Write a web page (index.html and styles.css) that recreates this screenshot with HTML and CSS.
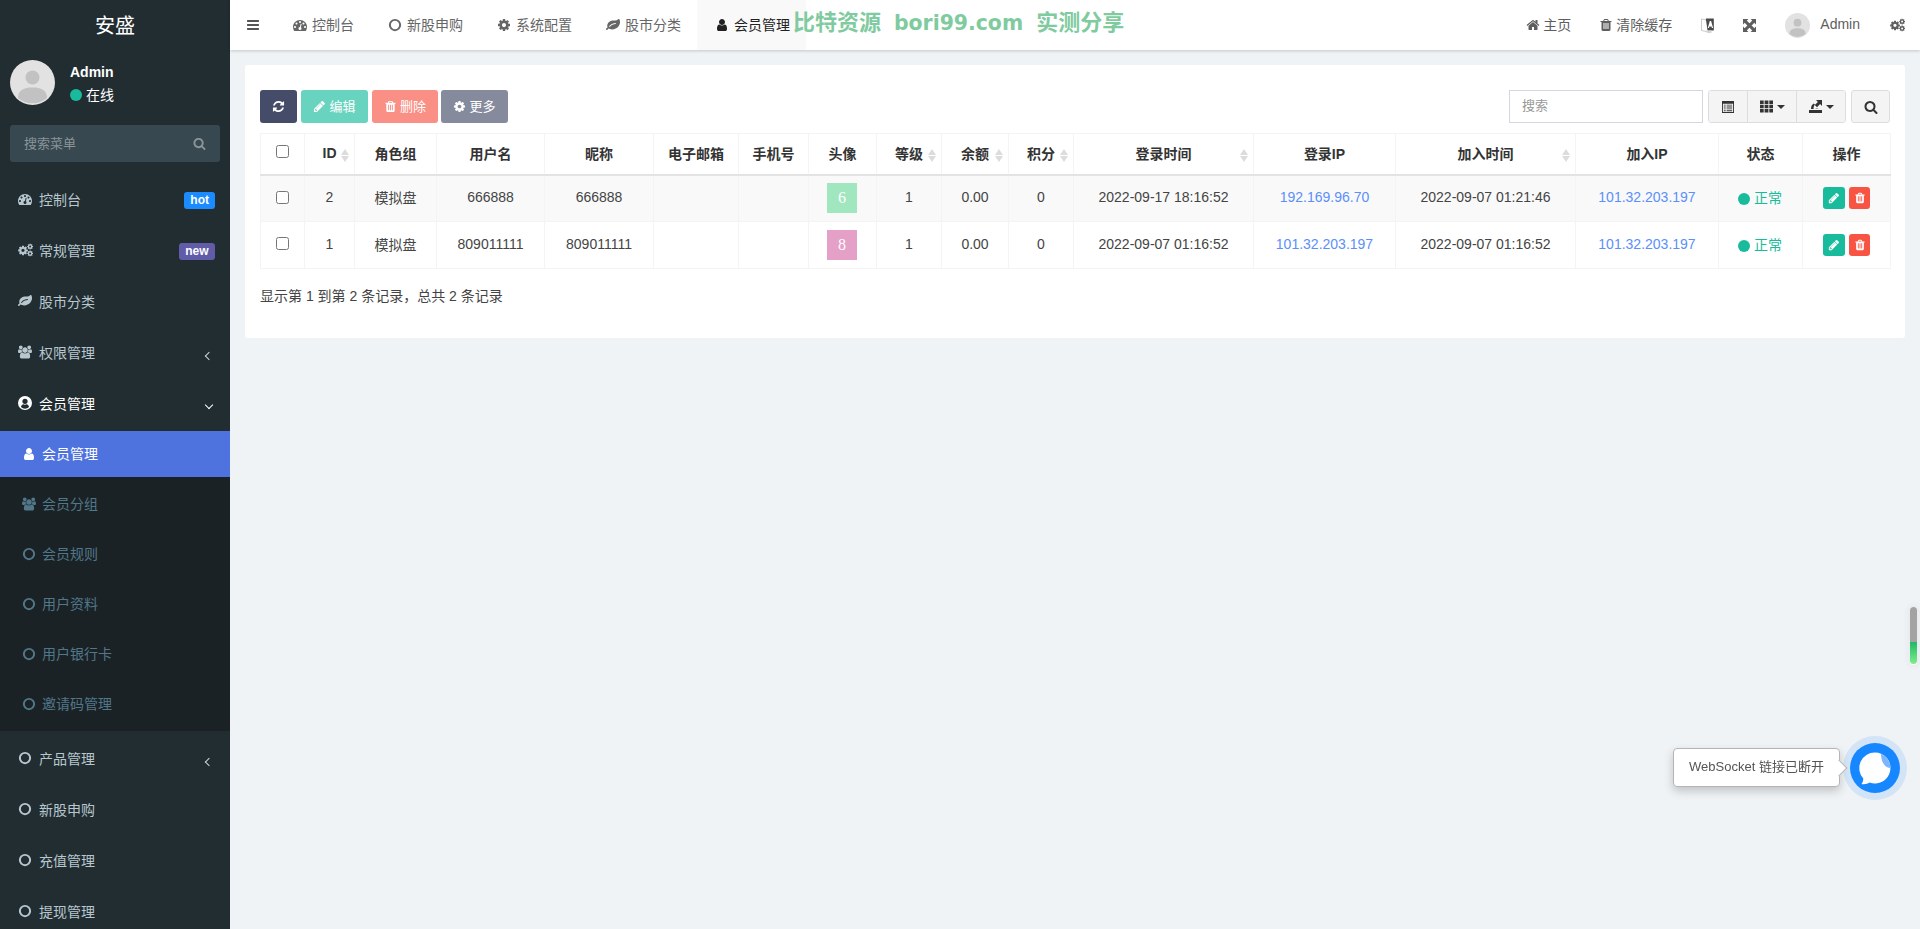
FILE: index.html
```html
<!DOCTYPE html>
<html lang="zh-CN">
<head>
<meta charset="utf-8">
<title>会员管理</title>
<link rel="stylesheet" href="styles.css">
</head>
<body>
<svg class="defs" aria-hidden="true">
  <symbol id="bars" viewBox="0 0 1792 1792"><path d="M1664 1344v128q0 26-19 45t-45 19h-1408q-26 0-45-19t-19-45v-128q0-26 19-45t45-19h1408q26 0 45 19t19 45zm0-512v128q0 26-19 45t-45 19h-1408q-26 0-45-19t-19-45v-128q0-26 19-45t45-19h1408q26 0 45 19t19 45zm0-512v128q0 26-19 45t-45 19h-1408q-26 0-45-19t-19-45v-128q0-26 19-45t45-19h1408q26 0 45 19t19 45z"/></symbol>
  <symbol id="search" viewBox="0 0 1792 1792"><path d="M1216 832q0-185-131.500-316.500t-316.500-131.500-316.500 131.500-131.500 316.500 131.500 316.500 316.500 131.500 316.500-131.500 131.500-316.500zm512 832q0 52-38 90t-90 38q-54 0-90-38l-343-342q-179 124-399 124-143 0-273.500-55.500t-225-150-150-225-55.500-273.500 55.500-273.500 150-225 225-150 273.500-55.500 273.500 55.500 225 150 150 225 55.500 273.500q0 220-124 399l343 343q37 37 37 90z"/></symbol>
  <symbol id="trash" viewBox="0 0 1792 1792"><path d="M704 1376v-704q0-14-9-23t-23-9h-64q-14 0-23 9t-9 23v704q0 14 9 23t23 9h64q14 0 23-9t9-23zm256 0v-704q0-14-9-23t-23-9h-64q-14 0-23 9t-9 23v704q0 14 9 23t23 9h64q14 0 23-9t9-23zm256 0v-704q0-14-9-23t-23-9h-64q-14 0-23 9t-9 23v704q0 14 9 23t23 9h64q14 0 23-9t9-23zm-544-992h448l-48-117q-7-9-17-11h-317q-10 2-17 11zm928 32v64q0 14-9 23t-23 9h-96v948q0 83-47 143.500t-113 60.500h-832q-66 0-113-58.500t-47-141.500v-952h-96q-14 0-23-9t-9-23v-64q0-14 9-23t23-9h309l70-167q15-37 54-63t79-26h320q40 0 79 26t54 63l70 167h309q14 0 23 9t9 23z"/></symbol>
  <symbol id="pencil" viewBox="0 0 1792 1792"><path d="M491 1536l91-91-235-235-91 91v107h128v128h107zm523-928q0-22-22-22-10 0-17 7l-542 542q-7 7-7 17 0 22 22 22 10 0 17-7l542-542q7-7 7-17zm-54-192l416 416-832 832h-416v-416zm683 96q0 53-37 90l-166 166-416-416 166-165q36-38 90-38 53 0 91 38l235 234q37 39 37 91z"/></symbol>
  <symbol id="home" viewBox="0 0 1792 1792"><path d="M1472 992v480q0 26-19 45t-45 19h-384v-384h-256v384h-384q-26 0-45-19t-19-45v-480q0-1 .5-3t.5-3l575-474 575 474q1 2 1 6zm223-69l-62 74q-8 9-21 11h-3q-13 0-21-7l-692-577-692 577q-12 8-24 7-13-2-21-11l-62-74q-8-10-7-23.500t11-21.500l719-599q32-26 76-26t76 26l244 204v-195q0-14 9-23t23-9h192q14 0 23 9t9 23v408l219 182q10 8 11 21.500t-7 23.500z"/></symbol>
  <symbol id="user" viewBox="0 0 1792 1792"><path d="M1536 1399q0 109-62.500 187t-150.500 78h-854q-88 0-150.500-78t-62.500-187q0-85 8.500-160.500t31.500-152 58.500-131 94-89 134.500-34.500q131 128 313 128t313-128q76 0 134.500 34.500t94 89 58.500 131 31.500 152 8.500 160.500zm-256-887q0 159-112.500 271.500t-271.500 112.500-271.500-112.500-112.500-271.500 112.500-271.500 271.500-112.500 271.500 112.500 112.500 271.500z"/></symbol>
  <symbol id="users" viewBox="0 0 1920 1792"><path d="M593 896q-162 5-265 128h-134q-82 0-138-40.500t-56-118.500q0-353 124-353 6 0 43.500 21t97.500 42.500 119 21.500q67 0 133-23-5 37-5 66 0 139 81 256zm1071 637q0 120-73 189.500t-194 69.500h-874q-121 0-194-69.500t-73-189.500q0-53 3.500-103.500t14-109 26.500-108.500 43-97.500 62-81 85.500-53.500 111.500-20q10 0 43 21.500t73 48 107 48 135 21.500 135-21.500 107-48 73-48 43-21.500q61 0 111.500 20t85.500 53.500 62 81 43 97.500 26.500 108.500 14 109 3.500 103.500zm-1024-1277q0 106-75 181t-181 75-181-75-75-181 75-181 181-75 181 75 75 181zm704 384q0 159-112.500 271.500t-271.500 112.500-271.500-112.500-112.500-271.500 112.500-271.500 271.500-112.500 271.500 112.500 112.500 271.500zm576 225q0 78-56 118.500t-138 40.500h-134q-103-123-265-128 81-117 81-256 0-29-5-66 66 23 133 23 59 0 119-21.500t97.500-42.500 43.500-21q124 0 124 353zm-128-609q0 106-75 181t-181 75-181-75-75-181 75-181 181-75 181 75 75 181z"/></symbol>
  <symbol id="cog" viewBox="0 0 1792 1792"><path id="cogp" d="M1152 896q0-106-75-181t-181-75-181 75-75 181 75 181 181 75 181-75 75-181zm512-109v222q0 12-8 23t-20 13l-185 28q-19 54-39 91 35 50 107 138 10 12 10 25t-9 23q-27 37-99 108t-94 71q-12 0-26-9l-138-108q-44 23-91 38-16 136-29 186-7 28-36 28h-222q-14 0-24.500-8.500t-11.500-21.500l-28-184q-49-16-90-37l-141 107q-10 9-25 9-14 0-25-11-126-114-165-168-7-10-7-23 0-12 8-23 15-21 51-66.500t54-70.500q-27-50-41-99l-183-27q-13-2-21-12.500t-8-23.500v-222q0-12 8-23t19-13l186-28q14-46 39-92-40-57-107-138-10-12-10-24 0-10 9-23 26-36 98.500-107.500t94.500-71.500q13 0 26 10l138 107q44-23 91-38 16-136 29-186 7-28 36-28h222q14 0 24.500 8.500t11.500 21.500l28 184q49 16 90 37l142-107q9-9 24-9 13 0 25 10 129 119 165 170 7 8 7 22 0 12-8 23-15 21-51 66.500t-54 70.500q26 50 41 98l183 28q13 2 21 12.500t8 23.500z"/></symbol>
  <symbol id="cogs" viewBox="0 0 2048 1792">
    <use href="#cogp" transform="translate(-90 190) scale(.86)"/>
    <use href="#cogp" transform="translate(1190 -40) scale(.52)"/>
    <use href="#cogp" transform="translate(1190 900) scale(.52)"/>
  </symbol>
  <symbol id="refresh" viewBox="0 0 1792 1792"><path d="M1639 1056q0 5-1 7-64 268-268 434.500t-478 166.500q-146 0-282.500-55t-243.500-157l-129 129q-19 19-45 19t-45-19-19-45v-448q0-26 19-45t45-19h448q26 0 45 19t19 45-19 45l-137 137q71 66 161 102t187 36q134 0 250-65t186-179q11-17 53-117 8-23 30-23h192q13 0 22.500 9.500t9.500 22.500zm25-800v448q0 26-19 45t-45 19h-448q-26 0-45-19t-19-45 19-45l138-138q-148-137-349-137-134 0-250 65t-186 179q-11 17-53 117-8 23-30 23h-199q-13 0-22.500-9.500t-9.500-22.500v-7q65-268 270-434.500t480-166.500q146 0 284 55.500t245 156.500l130-129q19-19 45-19t45 19 19 45z"/></symbol>
  <symbol id="leaf" viewBox="0 0 1792 1792"><path d="M1280 704q0-26-19-45t-45-19q-172 0-318 49.500t-259.500 134-235.500 219.500q-19 21-19 45 0 26 19 45t45 19q24 0 45-19 27-24 74-71t67-66q137-124 268.500-176t313.500-52q26 0 45-19t19-45zm512-198q0 95-20 193-46 224-184.500 383t-357.500 268q-214 108-438 108-148 0-286-47-15-5-88-42t-96-37q-16 0-39.500 32t-45 70-52.500 70-60 32q-30 0-51-11t-31-24-27-42q-2-4-6-11t-5.500-10-3-9.500-1.500-13.500q0-35 31-73.500t68-65.500 68-56 31-48q0-4-14-38t-16-44q-9-51-9-104 0-115 43.500-220t119-184.500 170.500-139 204-95.500q55-18 145-25.500t179.500-9 178.500-6 163.500-24 113.500-56.500l29.500-29.500 29.500-28 27-20 36.500-16 43.500-4.500q39 0 70.500 46t47.500 112 24 124 8 96z"/></symbol>
  <symbol id="dash" viewBox="0 0 1792 1792"><path d="M384 1152q0-53-37.500-90.500t-90.500-37.500-90.500 37.500-37.500 90.500 37.500 90.500 90.500 37.500 90.500-37.500 37.500-90.500zm192-448q0-53-37.500-90.500t-90.500-37.500-90.500 37.500-37.500 90.500 37.500 90.500 90.500 37.500 90.500-37.500 37.500-90.500zm428 481l101-382q6-26-7.500-48.500t-38.500-29.500-48 6.500-30 39.500l-101 382q-60 5-107 43.500t-63 98.500q-20 77 20 146t117 89 146-20 89-117q16-60-6-117t-72-91zm660-33q0-53-37.500-90.500t-90.500-37.500-90.500 37.500-37.500 90.500 37.500 90.500 90.500 37.500 90.500-37.500 37.500-90.500zm-640-640q0-53-37.500-90.500t-90.500-37.500-90.500 37.500-37.500 90.500 37.500 90.500 90.500 37.500 90.500-37.500 37.500-90.500zm448 192q0-53-37.500-90.500t-90.500-37.500-90.500 37.500-37.500 90.500 37.500 90.500 90.500 37.500 90.500-37.500 37.500-90.500zm320 448q0 261-141 483-19 29-54 29h-1402q-35 0-54-29-141-221-141-483 0-182 71-348t191-286 286-191 348-71 348 71 286 191 191 286 71 348z"/></symbol>
  <symbol id="ring" viewBox="0 0 24 24"><circle cx="12" cy="12" r="8.800" fill="none" stroke="currentColor" stroke-width="3.400"/></symbol>
  <symbol id="ucircle" viewBox="0 0 24 24"><path fill-rule="evenodd" d="M12 0a12 12 0 1 0 0 24 12 12 0 0 0 0-24zM12 4.500a4.500 4.500 0 1 1 0 9 4.500 4.500 0 0 1 0-9zM5 19c.6-3 2.600-4.500 4-4.800 1.800 1 4.200 1 6 0 1.400.3 3.400 1.800 4 4.800a9.700 9.700 0 0 1-14 0z"/></symbol>
  <symbol id="expand" viewBox="0 0 24 24"><path d="M0 0h10L0 10zM24 0v10L14 0zM0 24V14l10 10zM24 24H14l10-10z"/><path d="M4 4l16 16M20 4L4 20" fill="none" stroke="currentColor" stroke-width="5.500"/></symbol>
  <symbol id="grid" viewBox="0 0 13 12"><path d="M0 0h3.700v3.400H0zM4.600 0h3.800v3.400H4.600zM9.300 0H13v3.400H9.300zM0 4.300h3.700v3.400H0zM4.600 4.300h3.800v3.400H4.600zM9.300 4.300H13v3.400H9.300zM0 8.600h3.700V12H0zM4.600 8.600h3.800V12H4.600zM9.300 8.600H13V12H9.300z"/></symbol>
  <symbol id="sheet" viewBox="0 0 13 13"><path fill-rule="evenodd" d="M0 0h13v13H0zM1 3v9h11V3z"/><path d="M2 4h2v1H2zM5 4h6v1H5zM2 6h2v1H2zM5 6h6v1H5zM2 8h2v1H2zM5 8h6v1H5zM2 10h2v1H2zM5 10h6v1H5z"/></symbol>
  <symbol id="export" viewBox="0 0 13 13"><path d="M0 10h13v3H0z"/><path d="M7 0h6v6l-1.900-1.900L8 7.200 5.800 5l3.100-3.100z"/><path d="M2 9c0-2.800 1-4.500 2.800-5.500L6 4.800C4.800 5.700 4.600 7 4.600 9zM6 9l2-.6L9.500 9z"/></symbol>
  <symbol id="lang" viewBox="0 0 13 15"><path fill="#fff" stroke="#bdbdbd" stroke-width=".8" d="M.5 1l7 1.500V14l-7-1.500z"/><path fill="#4a4a4a" d="M4.800.5h8V12.500H6.500z"/><path fill="#fff" d="M6.800 10l2-7h1.300l2 7h-1.200l-.4-1.500H8.400L8 10z"/><path fill="#d5d5d5" d="M5 12.500h5.500V15H6z"/></symbol>
  <symbol id="avatar" viewBox="0 0 45 45"><circle cx="22.500" cy="22.500" r="22.500" fill="#e2e2e2"/><circle cx="22.500" cy="17.500" r="7" fill="#c2c2c2"/><path fill="#c2c2c2" d="M8 38c0-8 6-10.500 14.500-10.500S37 30 37 38a22.500 22.500 0 0 1-29 0z"/></symbol>
</svg>

<div class="app">
  <aside class="side">
    <div class="logo">安盛</div>
    <div class="upanel">
      <svg class="uimg"><use href="#avatar"/></svg>
      <div class="uinfo">
        <div class="uname">Admin</div>
        <div class="ustate"><span class="dot"></span>在线</div>
      </div>
    </div>
    <div class="sform"><span>搜索菜单</span><svg class="i sico"><use href="#search"/></svg></div>
    <ul class="menu">
      <li class="mi"><svg class="i"><use href="#dash"/></svg><span class="ml">控制台</span><b class="tag hot">hot</b></li>
      <li class="mi"><svg class="i cogi"><use href="#cogs"/></svg><span class="ml">常规管理</span><b class="tag new">new</b></li>
      <li class="mi"><svg class="i"><use href="#leaf"/></svg><span class="ml">股市分类</span></li>
      <li class="mi"><svg class="i"><use href="#users"/></svg><span class="ml">权限管理</span><i class="chev left"></i></li>
      <li class="mi open"><svg class="i"><use href="#ucircle"/></svg><span class="ml">会员管理</span><i class="chev down"></i></li>
      <li class="subwrap">
        <ul class="sub">
          <li class="si on"><svg class="i"><use href="#user"/></svg><span>会员管理</span></li>
          <li class="si"><svg class="i"><use href="#users"/></svg><span>会员分组</span></li>
          <li class="si"><svg class="i"><use href="#ring"/></svg><span>会员规则</span></li>
          <li class="si"><svg class="i"><use href="#ring"/></svg><span>用户资料</span></li>
          <li class="si"><svg class="i"><use href="#ring"/></svg><span>用户银行卡</span></li>
          <li class="si"><svg class="i"><use href="#ring"/></svg><span>邀请码管理</span></li>
        </ul>
      </li>
      <li class="mi"><svg class="i"><use href="#ring"/></svg><span class="ml">产品管理</span><i class="chev left"></i></li>
      <li class="mi"><svg class="i"><use href="#ring"/></svg><span class="ml">新股申购</span></li>
      <li class="mi"><svg class="i"><use href="#ring"/></svg><span class="ml">充值管理</span></li>
      <li class="mi"><svg class="i"><use href="#ring"/></svg><span class="ml">提现管理</span></li>
    </ul>
  </aside>

  <main class="main">
    <header class="top">
      <div class="burger"><svg class="i"><use href="#bars"/></svg></div>
      <nav class="tabs">
        <div class="tab"><svg class="i"><use href="#dash"/></svg><span>控制台</span></div>
        <div class="tab"><svg class="i"><use href="#ring"/></svg><span>新股申购</span></div>
        <div class="tab"><svg class="i"><use href="#cog"/></svg><span>系统配置</span></div>
        <div class="tab"><svg class="i"><use href="#leaf"/></svg><span>股市分类</span></div>
        <div class="tab act"><svg class="i"><use href="#user"/></svg><span>会员管理</span></div>
      </nav>
      <div class="tright">
        <div class="ti txt"><svg class="i home"><use href="#home"/></svg><span>主页</span></div>
        <div class="ti txt"><svg class="i bin"><use href="#trash"/></svg><span>清除缓存</span></div>
        <div class="ti"><svg class="i lang"><use href="#lang"/></svg></div>
        <div class="ti"><svg class="i exp"><use href="#expand"/></svg></div>
        <div class="ti tuser"><svg class="tava"><use href="#avatar"/></svg><span>Admin</span></div>
        <div class="ti"><svg class="i cogi"><use href="#cogs"/></svg></div>
      </div>
      <div class="mark"><span>比特资源</span><span class="en">bori99.com</span><span>实测分享</span></div>
    </header>

    <section class="content">
      <div class="panel">
        <div class="bar">
          <div class="acts">
            <button class="btn navy b-ref"><svg class="i"><use href="#refresh"/></svg></button>
            <button class="btn teal fade b-edit"><svg class="i"><use href="#pencil"/></svg><span>编辑</span></button>
            <button class="btn red fade b-del"><svg class="i"><use href="#trash"/></svg><span>删除</span></button>
            <button class="btn navy fade b-more"><svg class="i"><use href="#cog"/></svg><span>更多</span></button>
          </div>
          <div class="tools">
            <div class="sinput">搜索</div>
            <div class="group">
              <button class="gb w1"><svg class="i g12"><use href="#sheet"/></svg></button>
              <button class="gb w2"><svg class="i g13"><use href="#grid"/></svg><i class="caret"></i></button>
              <button class="gb w3"><svg class="i g13"><use href="#export"/></svg><i class="caret"></i></button>
            </div>
            <button class="gb solo"><svg class="i"><use href="#search"/></svg></button>
          </div>
        </div>

        <table class="grid">
          <thead>
            <tr>
              <th class="c1"><input type="checkbox"></th>
              <th class="c2 sort">ID</th>
              <th class="c3">角色组</th>
              <th class="c4">用户名</th>
              <th class="c5">昵称</th>
              <th class="c6">电子邮箱</th>
              <th class="c7">手机号</th>
              <th class="c8">头像</th>
              <th class="c9 sort">等级</th>
              <th class="c10 sort">余额</th>
              <th class="c11 sort">积分</th>
              <th class="c12 sort">登录时间</th>
              <th class="c13">登录IP</th>
              <th class="c14 sort">加入时间</th>
              <th class="c15">加入IP</th>
              <th class="c16">状态</th>
              <th class="c17">操作</th>
            </tr>
          </thead>
          <tbody>
            <tr class="odd">
              <td><input type="checkbox"></td><td>2</td><td>模拟盘</td><td>666888</td><td>666888</td><td></td><td></td>
              <td><span class="face green">6</span></td>
              <td>1</td><td>0.00</td><td>0</td><td>2022-09-17 18:16:52</td><td class="lnk">192.169.96.70</td><td>2022-09-07 01:21:46</td><td class="lnk">101.32.203.197</td>
              <td class="ok"><span class="okd"></span>正常</td>
              <td><div class="ops"><span class="op teal"><svg class="i"><use href="#pencil"/></svg></span><span class="op red del"><svg class="i"><use href="#trash"/></svg></span></div></td>
            </tr>
            <tr>
              <td><input type="checkbox"></td><td>1</td><td>模拟盘</td><td>809011111</td><td>809011111</td><td></td><td></td>
              <td><span class="face pink">8</span></td>
              <td>1</td><td>0.00</td><td>0</td><td>2022-09-07 01:16:52</td><td class="lnk">101.32.203.197</td><td>2022-09-07 01:16:52</td><td class="lnk">101.32.203.197</td>
              <td class="ok"><span class="okd"></span>正常</td>
              <td><div class="ops"><span class="op teal"><svg class="i"><use href="#pencil"/></svg></span><span class="op red del"><svg class="i"><use href="#trash"/></svg></span></div></td>
            </tr>
          </tbody>
        </table>
        <p class="foot">显示第 1 到第 2 条记录，总共 2 条记录</p>
      </div>
    </section>
  </main>
</div>

<div class="meter"><div class="mgrey"></div><div class="mgreen"></div></div>
<div class="chat">
  <div class="tip">WebSocket 链接已断开</div>
  <div class="orb">
    <svg viewBox="0 0 50 50" class="orbsvg">
      <path fill="#fff" d="M25 9.500a15.500 15.500 0 1 1-5.500 30c-2 1.500-5 2-8 1.500 1.200-1.500 1.800-3.500 1.800-5.500A15.500 15.500 0 0 1 25 9.500z"/>
      <path fill="#7db6ff" d="M31 10.700a15.500 15.500 0 0 1 9.500 14.300C35 25 31 19 31 10.700z"/>
    </svg>
  </div>
</div>
</body>
</html>
```

FILE: styles.css
```css
* { box-sizing: border-box; }
html, body { margin: 0; height: 100%; overflow: hidden; }
body {
  font-family: "Liberation Sans", "Noto Sans CJK SC", sans-serif;
  font-size: 14px;
  color: #333;
  background: #eff3f6;
}
ul { list-style: none; margin: 0; padding: 0; }
.defs { display: none; }
.i { width: 14px; height: 14px; fill: currentColor; flex: none; }

.app { display: flex; height: 929px; }

/* sidebar */
.side { width: 230px; flex: none; background: #222d32; overflow: hidden; color: #b8c7ce; }
.logo { height: 50px; line-height: 50px; text-align: center; color: #fff; font-size: 20px; padding-top: 1px; }
.upanel { display: flex; padding: 10px; height: 65px; }
.uimg { width: 45px; height: 45px; flex: none; }
.uinfo { margin-left: 15px; }
.uname { font-weight: 700; color: #fff; line-height: 20px; margin-top: 2px; }
.ustate { display: flex; align-items: center; color: #fff; line-height: 20px; margin-top: 3px; }
.dot { width: 12px; height: 12px; border-radius: 50%; background: #18bc9c; margin-right: 4px; }
.sform {
  margin: 10px; height: 37px; background: #374850; border-radius: 3px;
  display: flex; align-items: center; justify-content: space-between;
  padding: 0 14px; color: #8a9499; font-size: 13px;
}
.sform span { margin-bottom: 2px; }
.sico { width: 13px; height: 13px; }
.mi { height: 51px; padding: 3px 15px 0 18px; display: flex; align-items: center; }
.mi .cogi { width: 15px; }
.mi .cogi + .ml { margin-left: 6px; }
.ml { margin-left: 7px; flex: 1; }
.mi.open { color: #fff; }
.tag { color: #fff; font-size: 12px; line-height: 17px; border-radius: 3px; margin-top: 2px; }
.hot { background: #1a8cff; padding: 0 6px; }
.new { background: #605ca8; padding: 0 6.500px; }
.chev { width: 6px; height: 6px; border-left: 1.500px solid #cdd6da; border-bottom: 1.500px solid #cdd6da; margin: 8px 3px 0 0; }
.chev.left { transform: rotate(45deg); }
.chev.down { transform: rotate(-45deg); border-color: #fff; margin: 4px 3px 0 0; }
.subwrap { background: #1a2226; padding-bottom: 4px; }
.si { height: 46px; margin-top: 4px; padding-left: 22px; display: flex; align-items: center; color: #527789; }
.si span { margin-left: 6px; margin-bottom: 2px; }
.si.on { background: #4e73df; color: #fff; }

/* top bar */
.main { flex: 1; min-width: 0; display: flex; flex-direction: column; }
.top {
  height: 50px; flex: none; background: #fff; display: flex; position: relative;
  box-shadow: 0 1px 3px rgba(0,0,0,.18); color: #666;
}
.burger { width: 45px; padding-left: 16px; display: flex; align-items: center; color: #555; }
.tabs { display: flex; }
.tab { display: flex; align-items: center; padding: 0 16px 0 18px; }
.tab span { margin-left: 5px; margin-bottom: 2px; }
.act { background: #f9f9f9; color: #222; }
.tright { margin-left: auto; display: flex; }
.ti { display: flex; align-items: center; padding: 0 15px; color: #5e5e5e; }
.ti span { margin-left: 4px; margin-bottom: 2px; }
.ti.txt { padding-right: 14px; }
.home { width: 14px; margin-right: -1px; }
.bin { width: 14px; margin: 0 -1px; }
.lang { width: 13px; height: 15px; margin-right: -1px; }
.exp { width: 13px; height: 13px; }
.cogi { width: 15px; }
.ti.tuser { padding-left: 14px; }
.tuser span { margin-left: 10px; }
.tava { width: 25px; height: 25px; flex: none; }
.mark {
  position: absolute; left: 563px; top: 10px; display: flex; gap: 13px;
  color: #7fcb9f; font: 700 22px/26px "DejaVu Sans", "Noto Sans CJK SC", sans-serif;
  white-space: nowrap;
}
.mark .en { font-size: 20.400px; }

/* content */
.content { flex: 1; padding: 15px; }
.panel { background: #fff; border-radius: 3px; padding: 25px 15px 0; height: 273px; }
.bar { display: flex; justify-content: space-between; height: 33px; }
.acts { display: flex; gap: 4px; }
.btn {
  height: 33px; border: 0; border-radius: 3px; color: #fff; font: 13px "Liberation Sans", "Noto Sans CJK SC", sans-serif;
  padding: 0; display: flex; align-items: center; justify-content: center; gap: 3px;
}
.btn .i { width: 13px; height: 13px; }
.btn span { margin-bottom: 2px; }
.b-ref { width: 37px; }
.b-edit { width: 67px; }
.b-del { width: 66px; margin-right: -1px; }
.b-more { width: 67px; }
.navy { background: #444c69; }
.teal { background: #18bc9c; }
.red { background: #f75444; }
.fade { opacity: .65; }
.tools { display: flex; }
.sinput {
  width: 194px; height: 33px; border: 1px solid #d2d6de; padding: 0 12px; line-height: 29px;
  color: #999; font-size: 13px; background: #fff;
}
.group { display: flex; margin-left: 5px; border: 1px solid #ddd; border-radius: 3px; overflow: hidden; height: 33px; }
.gb {
  background: #f4f4f4; border: 0; color: #333; height: 31px; padding: 0;
  display: flex; align-items: center; justify-content: center; gap: 3px;
}
.gb + .gb { border-left: 1px solid #ddd; }
.g13 { width: 13px; height: 13px; }
.g12 { width: 12px; height: 12px; }
.w1 { width: 38px; }
.w2 { width: 49px; }
.w3 { width: 49px; }
.solo { width: 39px; height: 33px; margin-left: 5px; border: 1px solid #ddd; border-radius: 3px; }
.caret { width: 0; height: 0; border: 4px solid transparent; border-top-color: #333; border-bottom: 0; margin-left: 1px; }

/* table */
.grid { width: 1630px; table-layout: fixed; border-collapse: collapse; margin-top: 10px; }
.grid th, .grid td { border: 1px solid #f4f4f4; text-align: center; vertical-align: middle; padding: 0 0 2px; }
.grid th { height: 41px; position: relative; border-bottom: 2px solid #e3e3e3; font-weight: 700; color: #333; }
.grid td { height: 47px; color: #444; }
.odd td { background: #f9f9f9; }
.grid input { margin: 0 0 2px; width: 13px; height: 13px; vertical-align: middle; }
.grid th input { margin-bottom: 4px; }
.sort::before, .sort::after {
  content: ""; position: absolute; right: 5px; width: 0; height: 0;
  border-left: 4px solid transparent; border-right: 4px solid transparent;
}
.sort::before { top: 15px; border-bottom: 6px solid #dcdcdc; }
.sort::after { top: 22px; border-top: 6px solid #dcdcdc; }
.c1 { width: 44px; } .c2 { width: 50px; } .c3 { width: 82px; } .c4 { width: 108px; }
.c5 { width: 109px; } .c6 { width: 85px; } .c7 { width: 70px; } .c8 { width: 68px; }
.c9 { width: 65px; } .c10 { width: 67px; } .c11 { width: 65px; } .c12 { width: 180px; }
.c13 { width: 142px; } .c14 { width: 180px; } .c15 { width: 143px; } .c16 { width: 84px; } .c17 { width: 88px; }
.face {
  display: inline-block; width: 30px; height: 30px; color: #fff; margin: 0 1px -2px 0;
  font: 16px/30px "Liberation Serif", serif; vertical-align: middle;
}
.green { background: #a0e6be; }
.pink { background: #e4a0c6; }
.grid td.lnk { color: #5c8ffa; }
.grid td.ok { color: #18bc9c; }
.okd { display: inline-block; width: 12px; height: 12px; border-radius: 50%; background: #18bc9c; margin: 0 4px 0 -1px; vertical-align: -2px; }
.ops { display: flex; justify-content: center; gap: 4px; margin-bottom: -2px; }
.op { width: 22px; height: 22px; border-radius: 3px; color: #fff; display: flex; align-items: center; justify-content: center; }
.op.del { width: 21px; }
.op .i { width: 12px; height: 12px; }
.foot { margin: 17px 0 0; line-height: 20px; color: #444; }

/* floating widgets */
.meter {
  position: fixed; left: 1910px; top: 607px; width: 7px; height: 58px; border-radius: 4px; overflow: hidden;
  box-shadow: 0 0 5px 3px rgba(0,0,0,.03); background: #fff;
}
.mgrey { height: 35px; background: #a3a3a3; }
.mgreen { height: 22px; background: linear-gradient(#22b866, #7cee8a); border-radius: 0 0 4px 4px; }
.chat { position: fixed; left: 1673px; top: 743px; display: flex; align-items: center; }
.tip {
  width: 167px; height: 39px; background: #fff; border: 1px solid #b5b5b5; border-radius: 4px;
  box-shadow: 0 4px 10px rgba(0,0,0,.2); text-align: center; line-height: 36px; color: #555; font-size: 13px;
  position: relative; margin-top: -1px;
}
.tip::after {
  content: ""; position: absolute; right: -6px; top: 13px; width: 11px; height: 11px; background: #fff;
  border-top: 1px solid #b5b5b5; border-right: 1px solid #b5b5b5; transform: rotate(45deg);
}
.orb {
  width: 50px; height: 50px; border-radius: 50%; background: #1687ff; margin-left: 10px;
  box-shadow: 0 0 0 7px rgba(22,135,255,.13);
}
.orbsvg { display: block; width: 50px; height: 50px; }
```
